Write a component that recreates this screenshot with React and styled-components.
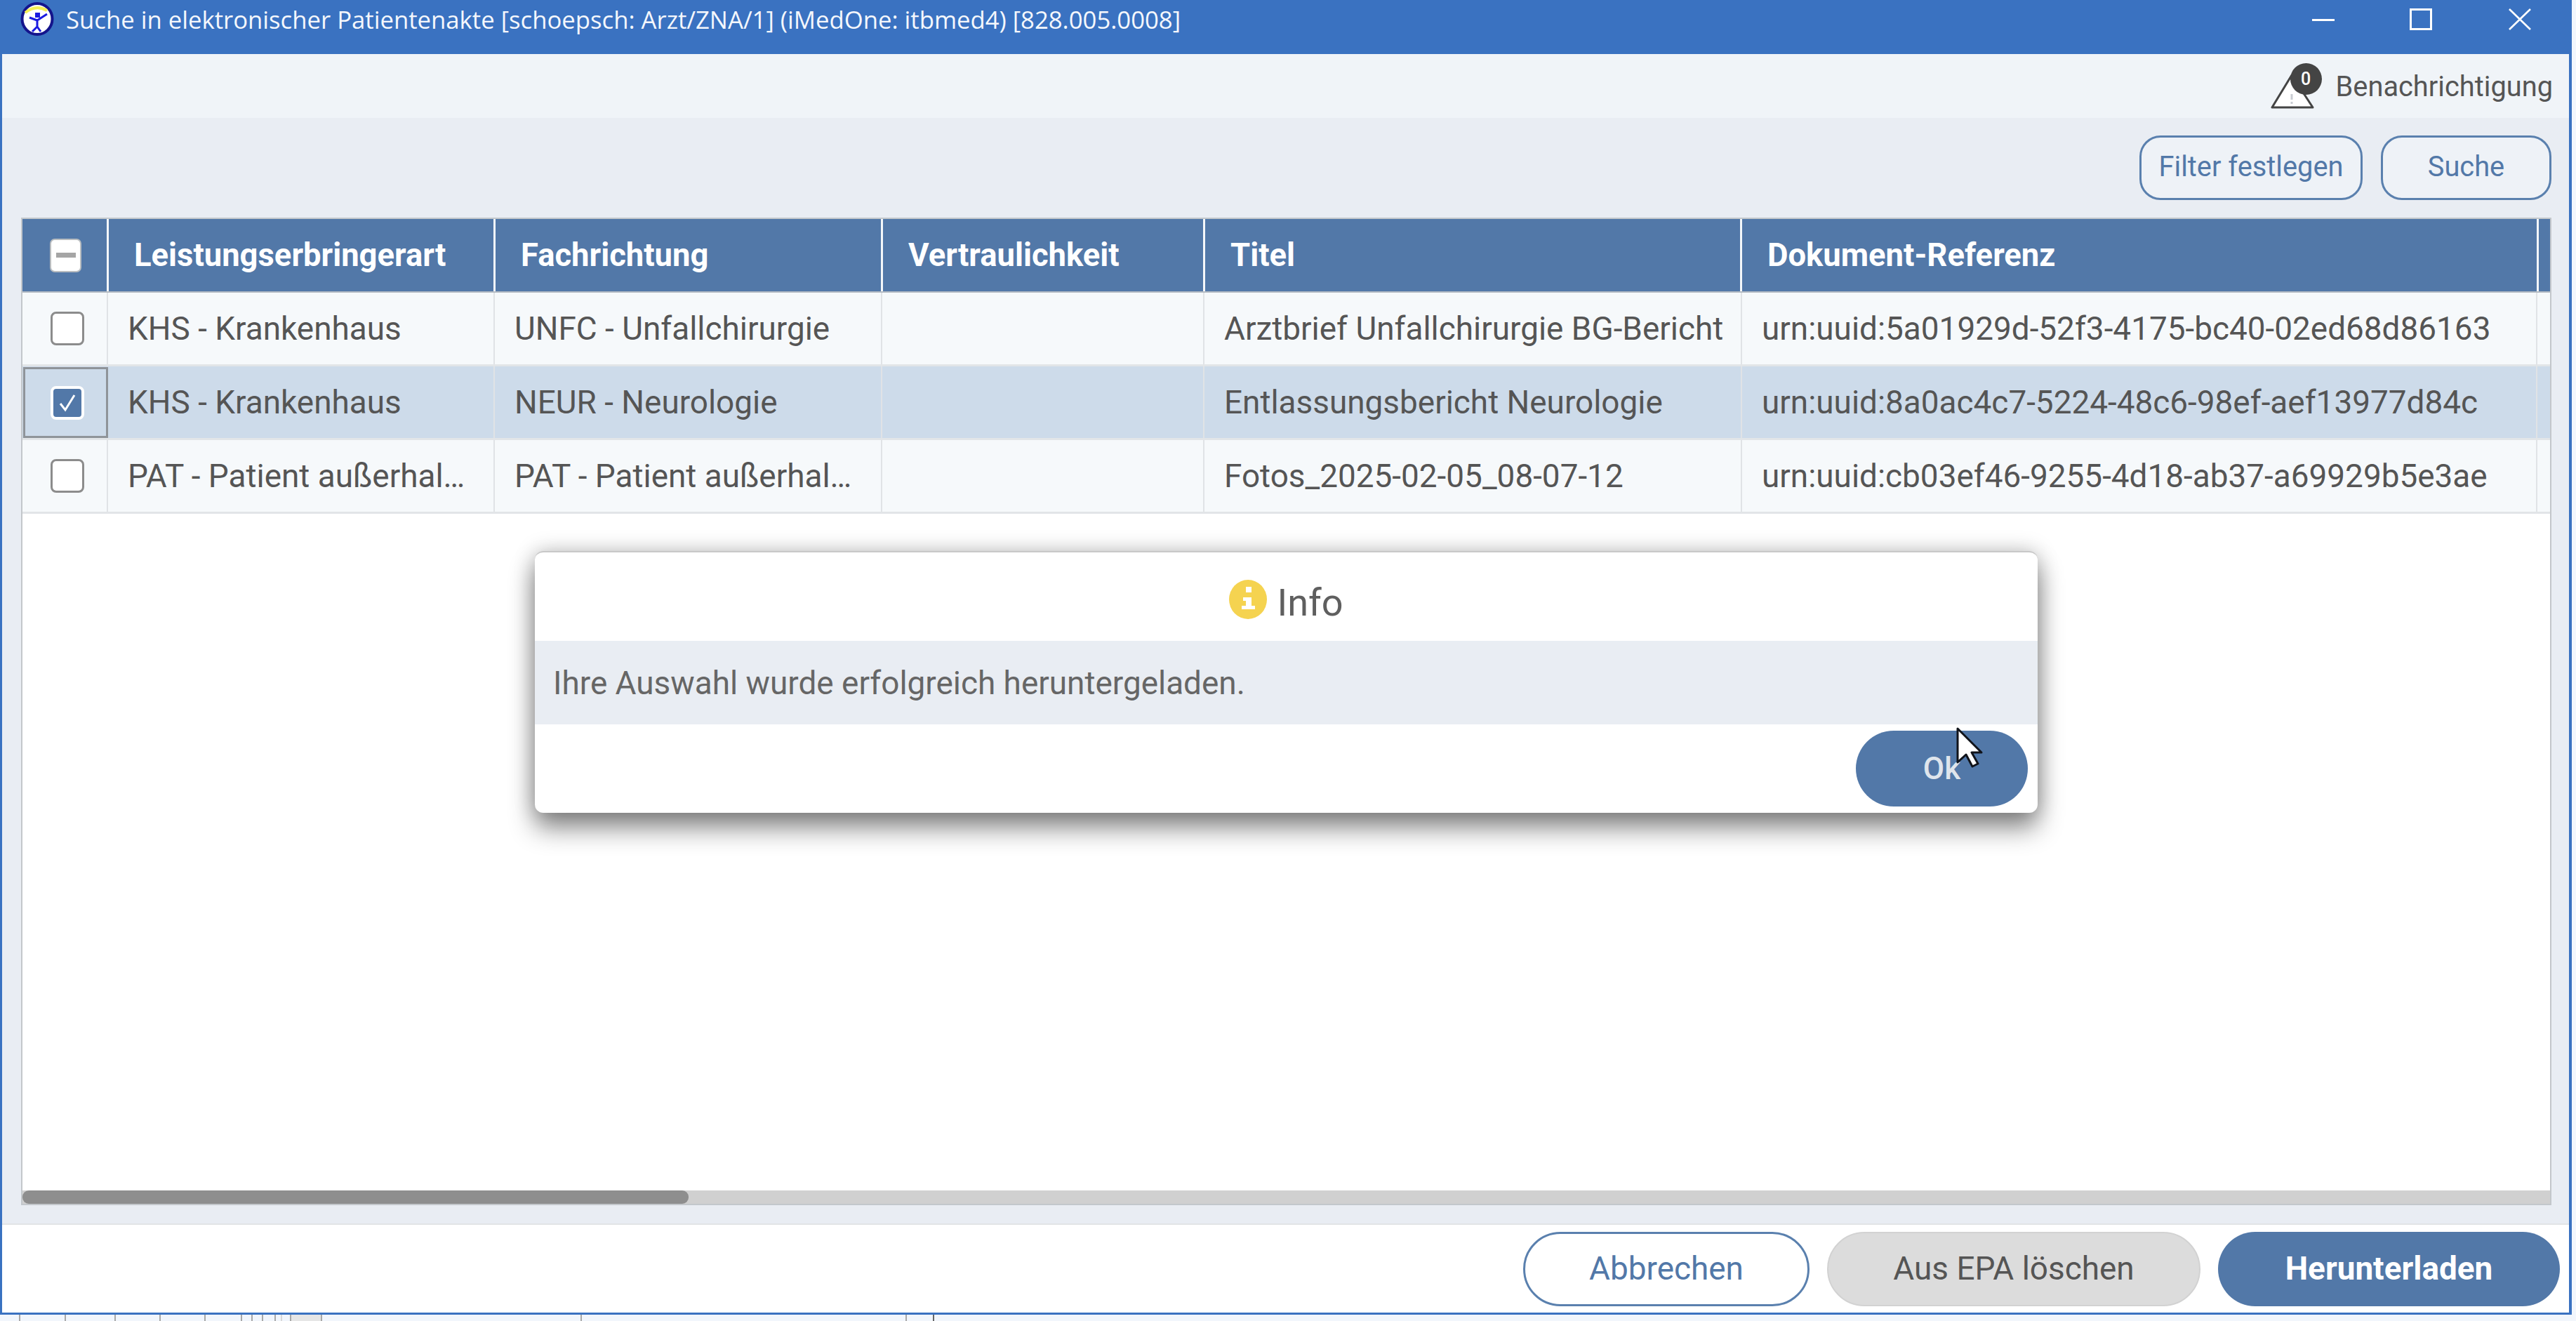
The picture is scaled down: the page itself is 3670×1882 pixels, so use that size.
import React from "react";
import styled, { createGlobalStyle } from "styled-components";

const Global = createGlobalStyle`
  html, body { margin: 0; padding: 0; background: #fff; }
  body { font-family: Roboto, "Liberation Sans", sans-serif; width: 3670px; height: 1882px; overflow: hidden; }
  * { box-sizing: border-box; }
`;

const Page = styled.div`
  width: 3670px;
  height: 1882px;
  display: flex;
  flex-direction: column;
  background: #f2f6fc;
`;
const Window = styled.div`
  width: 3664px;
  height: 1873px;
  display: flex;
  flex-direction: column;
  border-left: 3px solid #3a72c1;
  border-right: 4px solid #3a72c1;
  border-bottom: 3px solid #3a72c1;
  position: relative;
  background: #fff;
`;
const TitleBar = styled.div`
  height: 77px;
  flex: none;
  margin-left: -3px;
  margin-right: -4px;
  background: #3a72c1;
  display: flex;
  align-items: flex-start;
  color: #fff;
  padding-left: 29px;
`;
const TitleText = styled.div`
  font-family: "Open Sans", "Noto Sans", sans-serif;
  font-size: 34.7px;
  line-height: 56px;
  margin-left: 17px;
  flex: 1;
  white-space: nowrap;
  color: #f4f7fc;
`;
const WinIcon = styled.svg`
  display: block;
  flex: none;
  margin-top: ${(p) => p.$top || 0}px;
  margin-left: ${(p) => p.$left || 0}px;
  margin-right: ${(p) => p.$right || 0}px;
`;
const NoticeStrip = styled.div`
  height: 91px;
  flex: none;
  background: #f0f4f8;
  display: flex;
  justify-content: flex-end;
  align-items: center;
  padding-right: 23px;
`;
const BellWrap = styled.div`
  position: relative;
  width: 73px;
  height: 58px;
  margin-right: 20px;
  margin-top: 8px;
`;
const Badge = styled.div`
  position: absolute;
  left: 28px;
  top: -8px;
  width: 45px;
  height: 45px;
  border-radius: 50%;
  background: #444;
  color: #fff;
  font-size: 25px;
  font-weight: 500;
  display: flex;
  align-items: center;
  justify-content: center;
`;
const NoticeText = styled.div`
  font-size: 39.8px;
  color: #555;
  line-height: 50px;
  margin-top: 3px;
`;
const Main = styled.div`
  flex: 1;
  min-height: 0;
  background: #e9edf3;
  display: flex;
  flex-direction: column;
  padding: 25px 25px 26px 27px;
  border-bottom: 2px solid #e2e4e6;
`;
const FilterRow = styled.div`
  display: flex;
  justify-content: flex-end;
  gap: 26px;
  height: 92px;
  margin-bottom: 25px;
  flex: none;
`;
const OutlineButton = styled.div`
  width: ${(p) => p.$w}px;
  border: 3px solid #5a80ae;
  border-radius: 30px;
  background: #eef2f7;
  color: #5278a8;
  font-size: 39.8px;
  display: flex;
  align-items: center;
  justify-content: center;
  padding-bottom: 3px;
`;
const TableBox = styled.div`
  flex: 1;
  min-height: 0;
  display: flex;
  flex-direction: column;
  background: #fff;
  border: 2px solid #c3c7cb;
`;
const HeadRow = styled.div`
  height: 105px;
  flex: none;
  display: grid;
  grid-template-columns: 123px 551px 552px 459px 765px 1135px 1fr;
  background: #5278a8;
  border-bottom: 2px solid #b4bbc3;
`;
const HeadCell = styled.div`
  border-right: 3px solid #f4f7fa;
  color: #fff;
  font-size: 45.4px;
  font-weight: 700;
  display: flex;
  align-items: center;
  padding-left: 36px;
  white-space: nowrap;
  &:last-child { border-right: 0; }
`;
const HeadBoxCell = styled(HeadCell)`
  padding-left: 39px;
`;
const MinusBox = styled.div`
  width: 45px;
  height: 48px;
  border-radius: 7px;
  background: #fff;
  border: 2px solid #b9bdc0;
  display: flex;
  align-items: center;
  justify-content: center;
  &::after {
    content: "";
    width: 28px;
    height: 7px;
    background: #a5a5a5;
  }
`;
const Row = styled.div`
  height: 105px;
  flex: none;
  display: grid;
  grid-template-columns: 122px 551px 552px 459px 766px 1133px 1fr;
  background: ${(p) => (p.$selected ? "#cddbea" : "#f6f9fb")};
  border-bottom: 3px solid #e2e5e8;
`;
const Cell = styled.div`
  border-right: 2px solid #e0e3e6;
  display: flex;
  align-items: center;
  padding-left: 28px;
  color: #555;
  font-size: 45.9px;
  white-space: nowrap;
  overflow: hidden;
  &:last-child { border-right: 0; }
`;
const BoxCell = styled.div`
  display: flex;
  align-items: center;
  padding-left: 40px;
  border-right: 2px solid #e0e3e6;
  ${(p) => p.$selected && "border: 3px solid #8f9499; margin: 1px 0 0 1px; padding-left: 36px;"}
`;
const Check = styled.div`
  width: 48px;
  height: 48px;
  border-radius: 8px;
  background: #fff;
  border: 3px solid #8c8c8c;
`;
const CheckOn = styled.div`
  width: 48px;
  height: 48px;
  border-radius: 8px;
  background: #5278a8;
  border: 4px solid #fff;
  display: flex;
  align-items: center;
  justify-content: center;
`;
const Spacer = styled.div`
  flex: 1;
`;
const Track = styled.div`
  height: 19px;
  flex: none;
  background: #d0d0d0;
`;
const Thumb = styled.div`
  width: 949px;
  height: 100%;
  background: #8e8e8e;
  border-radius: 9px;
`;
const Footer = styled.div`
  height: 125px;
  flex: none;
  background: #fff;
  display: flex;
  justify-content: flex-end;
  align-items: flex-start;
  gap: 25px;
  padding-top: 10px;
  padding-right: 13px;
`;
const FooterButton = styled.div`
  width: ${(p) => p.$w}px;
  height: 106px;
  border-radius: 53px;
  display: flex;
  align-items: center;
  justify-content: center;
  padding-bottom: 3px;
  font-size: 45.9px;
  font-weight: ${(p) => (p.$variant === "primary" ? 700 : 400)};
  background: ${(p) => (p.$variant === "primary" ? "#5278a8" : p.$variant === "gray" ? "#dcdcdc" : "#fff")};
  color: ${(p) => (p.$variant === "primary" ? "#fff" : p.$variant === "gray" ? "#555" : "#5278a8")};
  border: ${(p) => (p.$variant === "outline" ? "3px solid #5a80ae" : p.$variant === "gray" ? "2px solid #d2d2d2" : "0")};
`;
const Sliver = styled.div`
  flex: 1;
  display: flex;
  background: #f2f6fc;
`;
const Tick = styled.div`
  width: ${(p) => p.$w}px;
  flex: none;
  border-right: 2px solid ${(p) => p.$c || "#a8a8a8"};
  background: ${(p) => p.$bg || "transparent"};
`;
const Dialog = styled.div`
  position: absolute;
  left: 759px;
  top: 785px;
  width: 2141px;
  height: 373px;
  background: #fff;
  border-radius: 12px;
  border-top: 2px solid #c8c8c8;
  box-shadow: 0 22px 36px rgba(0, 0, 0, 0.45), 0 0 30px rgba(0, 0, 0, 0.22);
  display: flex;
  flex-direction: column;
`;
const DialogHead = styled.div`
  height: 126px;
  flex: none;
  display: flex;
  align-items: center;
  justify-content: center;
  gap: 14px;
  padding-top: 8px;
  font-size: 54px;
  color: #5f5f5f;
`;
const DialogTitle = styled.span`
  margin-top: 8px;
`;
const DialogBody = styled.div`
  height: 119px;
  flex: none;
  background: #e9edf3;
  display: flex;
  align-items: center;
  padding-left: 26px;
  font-size: 45.9px;
  color: #666;
`;
const DialogFoot = styled.div`
  flex: 1;
  display: flex;
  justify-content: flex-end;
  align-items: flex-start;
  padding: 9px 14px 0 0;
`;
const OkButton = styled.div`
  width: 245px;
  height: 108px;
  border-radius: 54px;
  background: #5278a8;
  color: #dfe5ec;
  font-size: 44px;
  font-weight: 500;
  display: flex;
  align-items: center;
  justify-content: center;
  position: relative;
`;
const Cursor = styled.svg`
  position: absolute;
  left: 143px;
  top: -5px;
`;

const rows = [
  { s: false, c: ["KHS - Krankenhaus", "UNFC - Unfallchirurgie", "", "Arztbrief Unfallchirurgie BG-Bericht", "urn:uuid:5a01929d-52f3-4175-bc40-02ed68d86163"] },
  { s: true, c: ["KHS - Krankenhaus", "NEUR - Neurologie", "", "Entlassungsbericht Neurologie", "urn:uuid:8a0ac4c7-5224-48c6-98ef-aef13977d84c"] },
  { s: false, c: ["PAT - Patient außerhal…", "PAT - Patient außerhal…", "", "Fotos_2025-02-05_08-07-12", "urn:uuid:cb03ef46-9255-4d18-ab37-a69929b5e3ae"] },
];
const ticks = [
  [29], [65], [71], [64], [64], [52], [15], [15], [18], [9, "#d8d8d8"], [13], [44, "#a8a8a8", "#e6e6e6"], [370], [463], [39, "#666"],
];

export default function App() {
  return (
    <Page>
      <Global />
      <Window>
        <TitleBar>
          <WinIcon width="48" height="48" viewBox="0 0 48 48" $top={3}>
            <ellipse cx="24" cy="24" rx="21.5" ry="22" fill="#fff" stroke="#14148c" strokeWidth="4" />
            <path d="M7 15Q22 3 38 12" fill="none" stroke="#f5ef55" strokeWidth="4" />
            <rect x="21" y="15" width="7" height="7" fill="#1a1ae0" />
            <path d="M24 24v11M24 35l-7 7M24 35l5 7M24 26l-11-4M24 26l14-9" fill="none" stroke="#1a1ae0" strokeWidth="3" />
          </WinIcon>
          <TitleText>Suche in elektronischer Patientenakte [schoepsch: Arzt/ZNA/1] (iMedOne: itbmed4) [828.005.0008]</TitleText>
          <WinIcon width="32" height="4" viewBox="0 0 32 4" $top={27}>
            <rect width="32" height="3" fill="#fff" />
          </WinIcon>
          <WinIcon width="32" height="31" viewBox="0 0 32 31" $top={12} $left={107}>
            <rect x="1.5" y="1.5" width="29" height="28" fill="none" stroke="#fff" strokeWidth="3" />
          </WinIcon>
          <WinIcon width="32" height="31" viewBox="0 0 32 31" $top={12} $left={109} $right={58}>
            <path d="M1 1l30 29M31 1L1 30" fill="none" stroke="#fff" strokeWidth="2.6" />
          </WinIcon>
        </TitleBar>
        <NoticeStrip>
          <BellWrap>
            <svg width="62" height="52" viewBox="0 0 62 52" style={{ display: "block", position: "absolute", left: 0, top: 6 }}>
              <path d="M30 3L2 49h58z" fill="#fff" stroke="#444" strokeWidth="3" strokeLinejoin="round" />
              <path d="M30 30v8M30 41v3" stroke="#c9ccd2" strokeWidth="3" />
            </svg>
            <Badge>0</Badge>
          </BellWrap>
          <NoticeText>Benachrichtigung</NoticeText>
        </NoticeStrip>
        <Main>
          <FilterRow>
            <OutlineButton $w={318}>Filter festlegen</OutlineButton>
            <OutlineButton $w={243}>Suche</OutlineButton>
          </FilterRow>
          <TableBox>
            <HeadRow>
              <HeadBoxCell><MinusBox /></HeadBoxCell>
              <HeadCell>Leistungserbringerart</HeadCell>
              <HeadCell>Fachrichtung</HeadCell>
              <HeadCell>Vertraulichkeit</HeadCell>
              <HeadCell>Titel</HeadCell>
              <HeadCell>Dokument-Referenz</HeadCell>
              <HeadCell />
            </HeadRow>
            {rows.map((r, i) => (
              <Row key={i} $selected={r.s}>
                <BoxCell $selected={r.s}>
                  {r.s ? (
                    <CheckOn>
                      <svg width="28" height="28" viewBox="0 0 28 28">
                        <path d="M4 15l7 9L24 3" fill="none" stroke="#fff" strokeWidth="3" />
                      </svg>
                    </CheckOn>
                  ) : (
                    <Check />
                  )}
                </BoxCell>
                {r.c.map((t, j) => (
                  <Cell key={j}>{t}</Cell>
                ))}
                <Cell />
              </Row>
            ))}
            <Spacer />
            <Track>
              <Thumb />
            </Track>
          </TableBox>
        </Main>
        <Footer>
          <FooterButton $w={408} $variant="outline">Abbrechen</FooterButton>
          <FooterButton $w={532} $variant="gray">Aus EPA löschen</FooterButton>
          <FooterButton $w={487} $variant="primary">Herunterladen</FooterButton>
        </Footer>
        <Dialog>
          <DialogHead>
            <svg width="54" height="56" viewBox="0 0 54 56">
              <ellipse cx="27" cy="28" rx="27" ry="28" fill="#f5d350" />
              <rect x="24" y="10" width="8" height="8" fill="#fff" />
              <path d="M20 25h12v12h5v5H18v-5h6v-7h-4z" fill="#fff" />
            </svg>
            <DialogTitle>Info</DialogTitle>
          </DialogHead>
          <DialogBody>Ihre Auswahl wurde erfolgreich heruntergeladen.</DialogBody>
          <DialogFoot>
            <OkButton>
              Ok
              <Cursor width="38" height="58" viewBox="0 0 38 58">
                <path d="M2 2v48l12-11 9 17 8-4-9-16h14z" fill="#fff" stroke="#10131a" strokeWidth="3" strokeLinejoin="round" />
              </Cursor>
            </OkButton>
          </DialogFoot>
        </Dialog>
      </Window>
      <Sliver>
        {ticks.map(([w, c, bg], i) => (
          <Tick key={i} $w={w} $c={c} $bg={bg} />
        ))}
      </Sliver>
    </Page>
  );
}
